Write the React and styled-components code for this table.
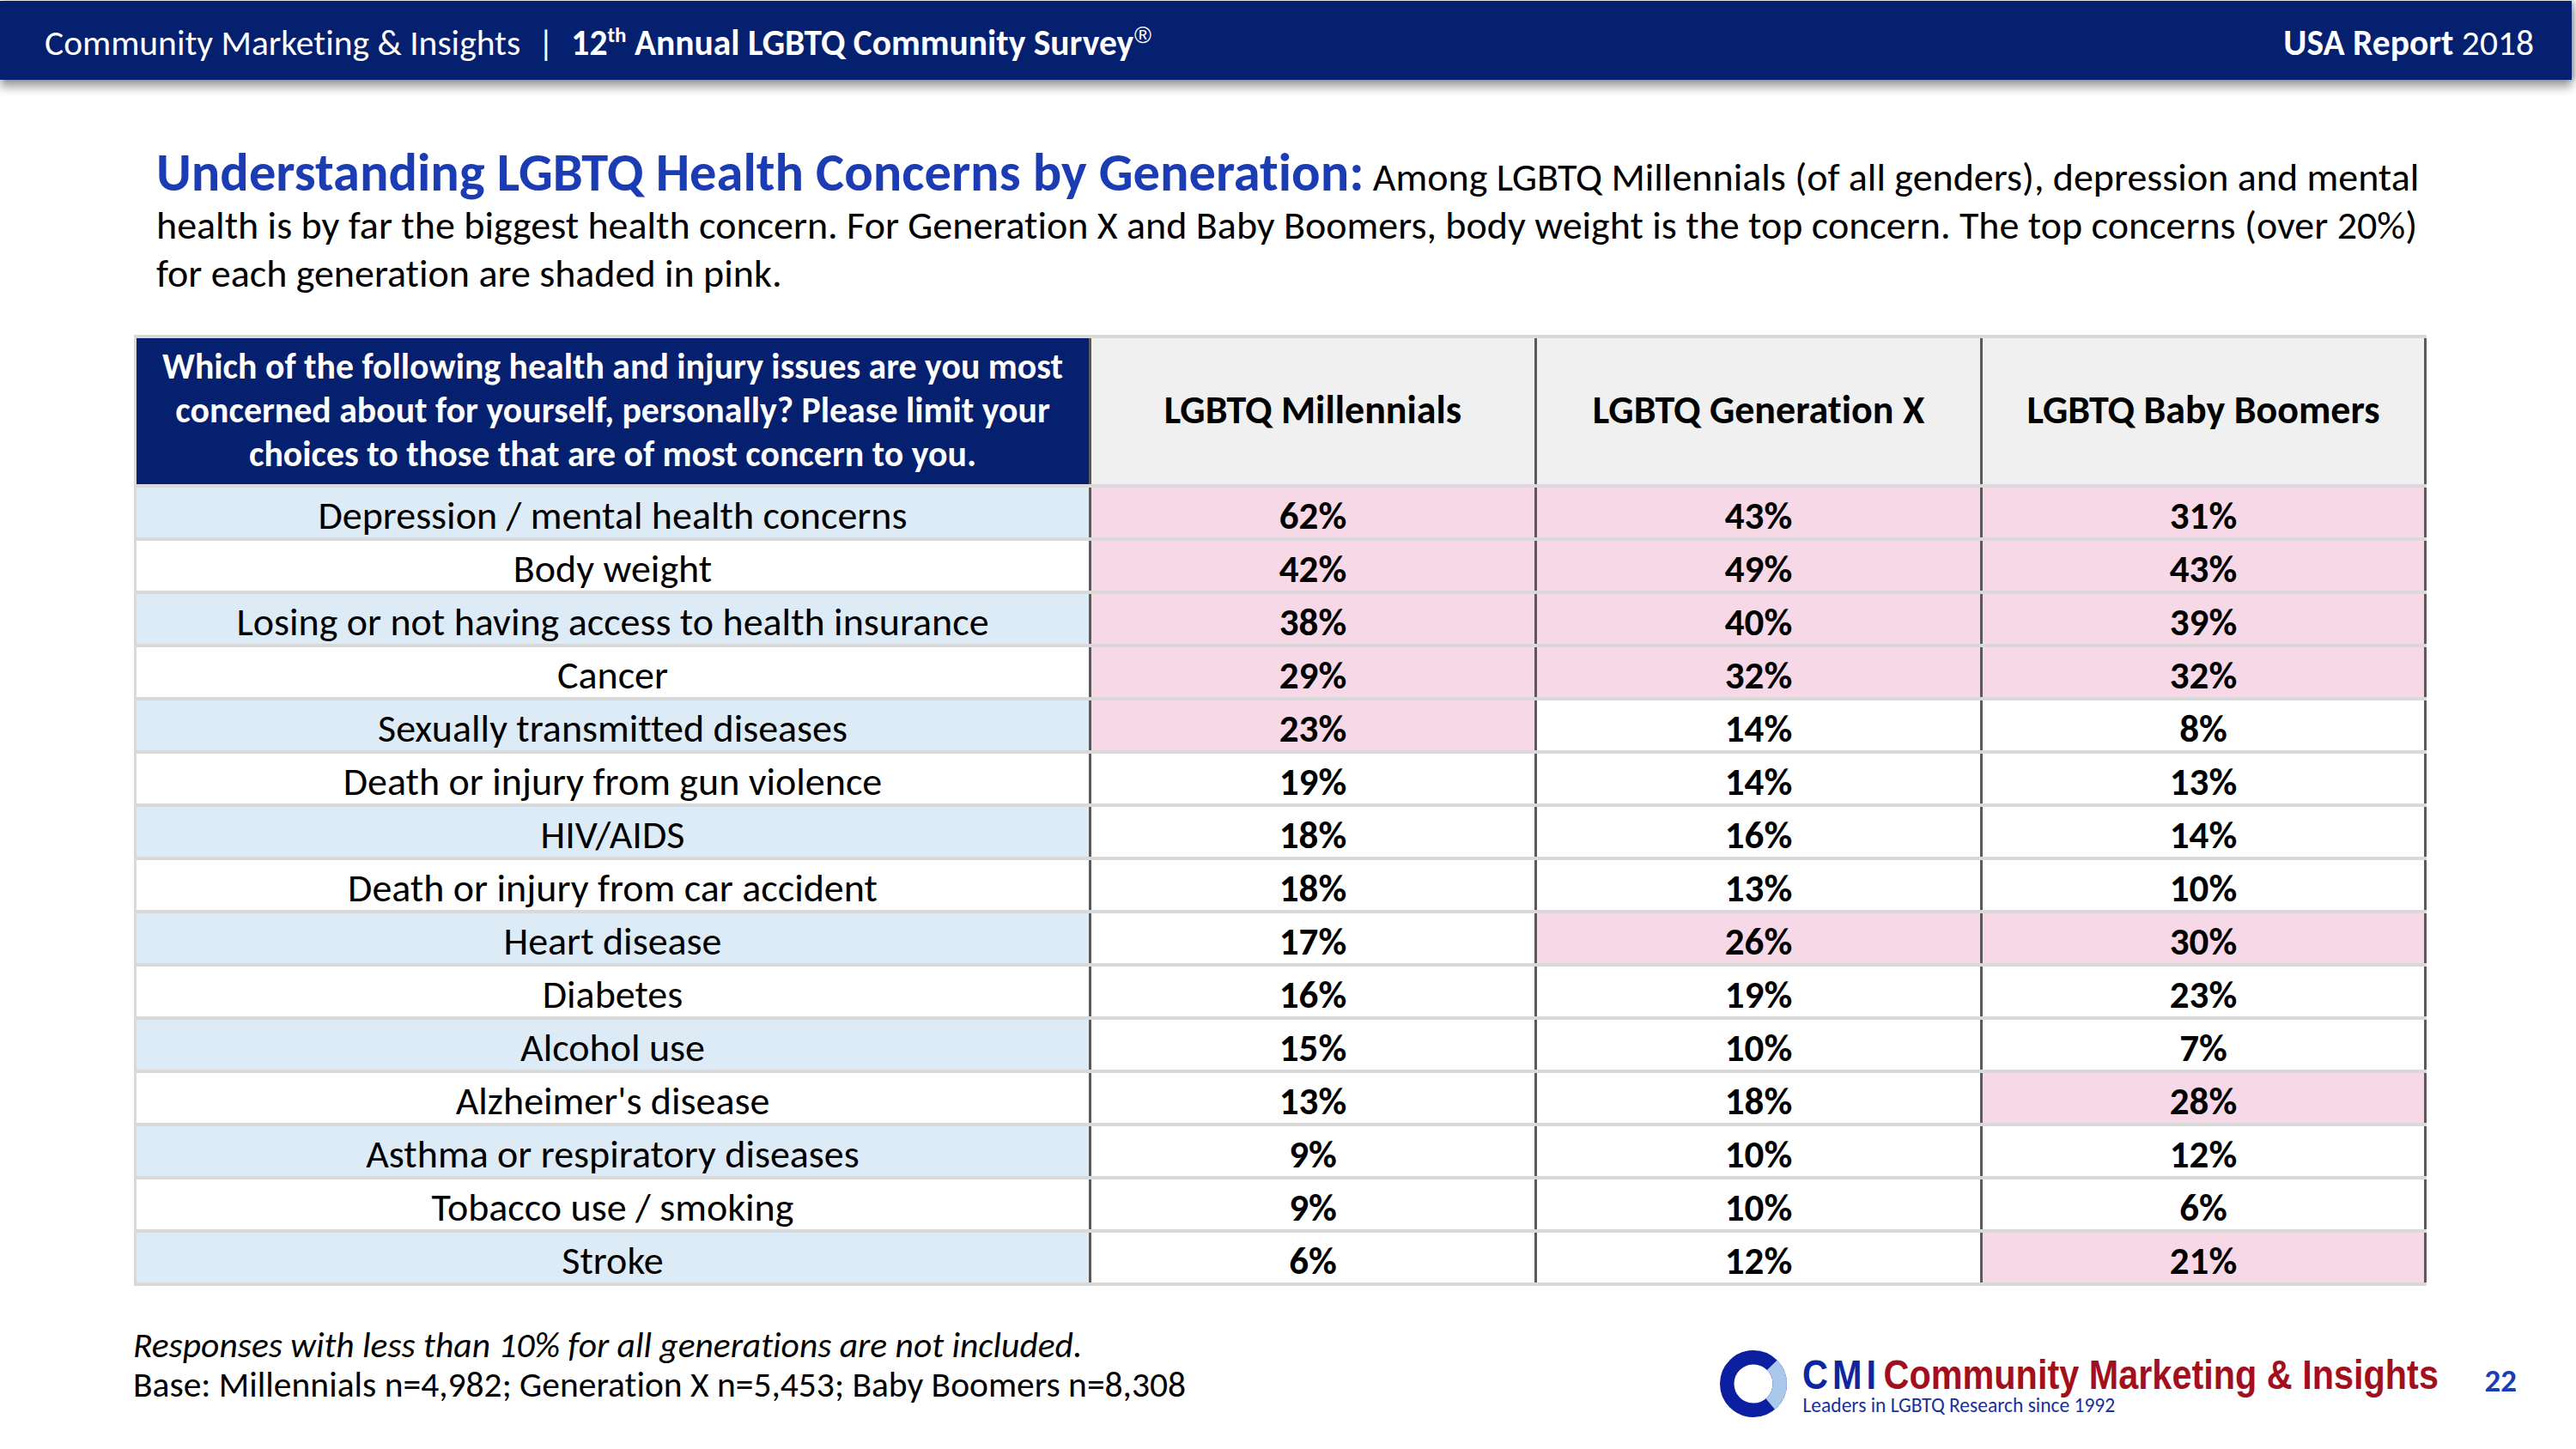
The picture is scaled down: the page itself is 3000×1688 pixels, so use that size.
import React from "react";
import styled, { createGlobalStyle } from "styled-components";

const FONT = `Carlito, Calibri, Lato, "Open Sans", sans-serif`;

const GlobalStyle = createGlobalStyle`
  *, *::before, *::after { box-sizing: border-box; }
  html, body { margin: 0; padding: 0; background: #fff; }
  body {
    font-family: ${FONT};
    color: #000;
    font-variant-ligatures: no-common-ligatures;
    font-feature-settings: "liga" 0, "clig" 0;
  }
`;

const Page = styled.div`
  width: 3000px;
  height: 1688px;
  display: flex;
  flex-direction: column;
  overflow: hidden;
  background: #fff;
`;

const TopBar = styled.header`
  flex-shrink: 0;
  height: 92px;
  margin: 1px 5px 0 0;
  padding: 4px 44px 0 52px;
  background: #05206f;
  box-shadow: 0 9px 10px rgba(0, 0, 0, 0.35), 4px 0 6px rgba(0, 0, 0, 0.25);
  display: flex;
  align-items: center;
  justify-content: space-between;
  color: #fff;
  font-size: 41.5px;
  white-space: nowrap;
`;

const BarLeft = styled.div`
  display: flex;
  align-items: baseline;
`;

const Sep = styled.span`
  margin: 0 20px 0 20px;
  font-weight: 300;
`;

const Bold = styled.span`
  font-weight: 700;
`;

const Sup = styled.sup`
  font-size: 25px;
  font-weight: 700;
  line-height: 0;
  vertical-align: 15px;
`;

const Registered = styled.sup`
  font-family: "Liberation Sans", Arial, sans-serif;
  font-size: 27px;
  font-weight: 400;
  line-height: 0;
  vertical-align: 14px;
  margin-left: 1px;
`;

const Intro = styled.p`
  margin: 80px 0 0 182px;
  font-size: 46px;
  line-height: 56px;
  white-space: nowrap;
`;

const Title = styled.span`
  color: #1c3cb4;
  font-weight: 700;
  font-size: 62.5px;
`;

const Table = styled.div`
  display: grid;
  grid-template-columns: 1109px 519px 519px 520px;
  grid-auto-rows: 58px;
  grid-template-rows: 170px;
  row-gap: 4px;
  width: fit-content;
  margin: 44px 0 0 156px;
  padding: 4px 0 4px 3px;
  background: #d9d9d9;
`;

const CellBase = styled.div`
  display: flex;
  align-items: center;
  justify-content: center;
  text-align: center;
`;

const QuestionCell = styled(CellBase)`
  background: #05206f;
  color: #fff;
  font-weight: 700;
  font-size: 41.8px;
  line-height: 51px;
  padding: 0 14px 4px;
`;

const GenCell = styled(CellBase)`
  background: #f0f0f0;
  font-weight: 700;
  font-size: 46px;
  border-left: 3px solid #5a5a5a;
  border-right: ${(p) => (p.$last ? "3px solid #5a5a5a" : "none")};
  padding-bottom: 4px;
`;

const LabelCell = styled(CellBase)`
  background: ${(p) => (p.$shade ? "#ddebf7" : "#fff")};
  font-size: 46px;
  padding-top: 6px;
`;

const ValueCell = styled(CellBase)`
  background: ${(p) => (p.$pink ? "#f7d8e6" : "#fff")};
  font-size: 45px;
  font-weight: 700;
  border-left: 3px solid #5a5a5a;
  border-right: ${(p) => (p.$last ? "3px solid #5a5a5a" : "none")};
  padding-top: 6px;
`;

const Footer = styled.footer`
  display: flex;
  justify-content: space-between;
  align-items: flex-start;
  margin-top: 46px;
  padding: 0 69px 0 155px;
`;

const Notes = styled.div`
  font-size: 41.5px;
  line-height: 46px;
`;

const Italic = styled.div`
  font-style: italic;
`;

const Brand = styled.div`
  display: flex;
  align-items: flex-start;
`;

const Logo = styled.div`
  display: flex;
  align-items: flex-start;
  margin-top: 28px;
`;

const Ring = styled.svg`
  width: 80px;
  height: 80px;
  flex-shrink: 0;
`;

const LogoText = styled.div`
  margin-left: 17px;
  margin-top: 5px;
  display: flex;
  flex-direction: column;
`;

const LogoMain = styled.div`
  width: 742px;
  height: 49px;
  font-family: "Liberation Sans Narrow", "Arial Narrow", "Liberation Sans", Arial, sans-serif;
  font-weight: 700;
  font-size: 49px;
  line-height: 49px;
  white-space: nowrap;
`;

const Condensed = styled.span`
  display: inline-block;
  transform: scaleX(0.845);
  transform-origin: left center;
`;

const Cmi = styled.span`
  color: #0d27a0;
  letter-spacing: 6px;
  margin-right: 4px;
`;

const Cmname = styled.span`
  color: #a30f1d;
`;

const Tagline = styled.div`
  font-size: 23.5px;
  line-height: 23px;
  color: #1a2f9c;
  white-space: nowrap;
`;

const PageNum = styled.div`
  margin: 46px 0 0 52px;
  font-size: 37px;
  line-height: 37px;
  font-weight: 700;
  color: #1a3db5;
`;

const ROWS = [
  ["Depression / mental health concerns", [62, 43, 31], [1, 1, 1]],
  ["Body weight", [42, 49, 43], [1, 1, 1]],
  ["Losing or not having access to health insurance", [38, 40, 39], [1, 1, 1]],
  ["Cancer", [29, 32, 32], [1, 1, 1]],
  ["Sexually transmitted diseases", [23, 14, 8], [1, 0, 0]],
  ["Death or injury from gun violence", [19, 14, 13], [0, 0, 0]],
  ["HIV/AIDS", [18, 16, 14], [0, 0, 0]],
  ["Death or injury from car accident", [18, 13, 10], [0, 0, 0]],
  ["Heart disease", [17, 26, 30], [0, 1, 1]],
  ["Diabetes", [16, 19, 23], [0, 0, 0]],
  ["Alcohol use", [15, 10, 7], [0, 0, 0]],
  ["Alzheimer's disease", [13, 18, 28], [0, 0, 1]],
  ["Asthma or respiratory diseases", [9, 10, 12], [0, 0, 0]],
  ["Tobacco use / smoking", [9, 10, 6], [0, 0, 0]],
  ["Stroke", [6, 12, 21], [0, 0, 1]],
];

const GENS = ["LGBTQ Millennials", "LGBTQ Generation X", "LGBTQ Baby Boomers"];

export default function App() {
  return (
    <>
      <GlobalStyle />
      <Page>
        <TopBar>
          <BarLeft>
            <span>Community Marketing &amp; Insights</span>
            <Sep>|</Sep>
            <Bold>
              12<Sup>th</Sup> Annual LGBTQ Community Survey<Registered>®</Registered>
            </Bold>
          </BarLeft>
          <div>
            <Bold>USA Report</Bold> 2018
          </div>
        </TopBar>

        <Intro>
          <Title>Understanding LGBTQ Health Concerns by Generation:</Title> Among LGBTQ Millennials (of all genders), depression and mental
          <br />
          health is by far the biggest health concern. For Generation X and Baby Boomers, body weight is the top concern. The top concerns (over 20%)
          <br />
          for each generation are shaded in pink.
        </Intro>

        <Table>
          <QuestionCell>
            Which of the following health and injury issues are you most concerned about for yourself, personally? Please limit your choices to those that are of most concern to you.
          </QuestionCell>
          {GENS.map((g, i) => (
            <GenCell key={g} $last={i === 2}>
              {g}
            </GenCell>
          ))}
          {ROWS.map(([label, vals, pink], r) => (
            <React.Fragment key={label}>
              <LabelCell $shade={r % 2 === 0}>{label}</LabelCell>
              {vals.map((v, c) => (
                <ValueCell key={c} $pink={!!pink[c]} $last={c === 2}>
                  {v}%
                </ValueCell>
              ))}
            </React.Fragment>
          ))}
        </Table>

        <Footer>
          <Notes>
            <Italic>Responses with less than 10% for all generations are not included.</Italic>
            <div>Base: Millennials n=4,982; Generation X n=5,453; Baby Boomers n=8,308</div>
          </Notes>
          <Brand>
            <Logo>
              <Ring viewBox="0 0 80 80">
                <circle cx="40" cy="40" r="30.75" fill="none" stroke="#0b1fa0" strokeWidth="16.5" />
                <path d="M61.74 18.26 A30.75 30.75 0 0 1 59.77 63.56" fill="none" stroke="#a9c8ea" strokeWidth="16.5" />
              </Ring>
              <LogoText>
                <LogoMain>
                  <Condensed>
                    <Cmi>CMI</Cmi>
                    <Cmname>Community Marketing &amp; Insights</Cmname>
                  </Condensed>
                </LogoMain>
                <Tagline>Leaders in LGBTQ Research since 1992</Tagline>
              </LogoText>
            </Logo>
            <PageNum>22</PageNum>
          </Brand>
        </Footer>
      </Page>
    </>
  );
}
